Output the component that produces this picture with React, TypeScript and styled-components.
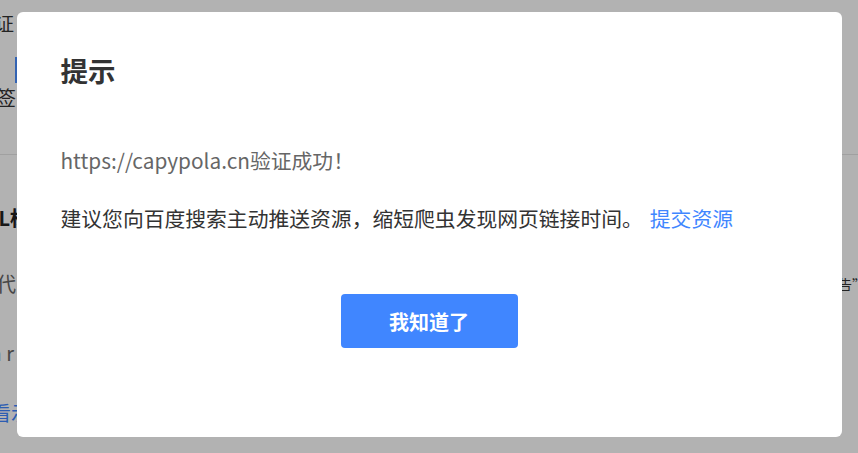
import React from "react";
import styled, { createGlobalStyle } from "styled-components";

const GlobalStyle = createGlobalStyle`
  html, body {
    margin: 0;
    padding: 0;
    width: 858px;
    height: 453px;
    overflow: hidden;
    background: #ffffff;
    font-family: "Noto Sans CJK SC", "Noto Sans", sans-serif;
  }
  * { box-sizing: border-box; }
`;

/* ---------- background page (mostly hidden by the dialog) ---------- */

const Page = styled.div`
  width: 858px;
  height: 453px;
  display: flex;
  flex-direction: column;
  background: #ffffff;
  overflow: hidden;
`;

const BgRow = styled.div<{ $h: number }>`
  height: ${(p) => p.$h}px;
  display: flex;
  align-items: center;
  justify-content: space-between;
  flex-shrink: 0;
`;

const Clip = styled.div<{ $end: number }>`
  width: ${(p) => p.$end}px;
  display: flex;
  justify-content: flex-end;
  white-space: nowrap;
  flex-shrink: 0;
`;

const BgText = styled.span<{ $size: number; $color: string; $bold?: boolean }>`
  font-size: ${(p) => p.$size}px;
  line-height: 1;
  color: ${(p) => p.$color};
  font-weight: ${(p) => (p.$bold ? 700 : 400)};
`;

const TabBar = styled.div`
  align-self: flex-start;
  width: 6px;
  height: 26px;
  margin: 13px 0 0 15px;
  background: #4a8fff;
`;

const Divider = styled.div`
  height: 1px;
  background: #e6e6e6;
  flex-shrink: 0;
`;

const RightBit = styled.div`
  width: 20px;
  display: flex;
  white-space: nowrap;
  overflow: hidden;
  flex-shrink: 0;
`;

/* ---------- dialog ---------- */

const Overlay = styled.div`
  position: fixed;
  inset: 0;
  background: rgba(0, 0, 0, 0.3);
  display: flex;
  justify-content: center;
  align-items: flex-start;
  padding-top: 12px;
`;

const Dialog = styled.div`
  width: 825px;
  background: #ffffff;
  border-radius: 6px;
  padding: 40px 44px 89px 44px;
  display: flex;
  flex-direction: column;
`;

const Title = styled.h2`
  margin: 0;
  font-size: 27.5px;
  line-height: 36px;
  font-weight: 700;
  color: #333333;
`;

const Message = styled.p<{ $tone: "muted" | "main"; $gap: number }>`
  margin: ${(p) => p.$gap}px 0 0 0;
  font-size: 20.8px;
  line-height: 30px;
  white-space: nowrap;
  color: ${(p) => (p.$tone === "muted" ? "#666666" : "#333333")};
`;

const Link = styled.a`
  color: #4086ff;
  text-decoration: none;
  margin-left: 7px;
`;

const Footer = styled.div`
  margin-top: 61px;
  display: flex;
  justify-content: center;
`;

const Button = styled.button`
  width: 177px;
  height: 54px;
  border: none;
  border-radius: 4px;
  background: #4086ff;
  color: #ffffff;
  font-family: inherit;
  font-size: 20px;
  font-weight: 700;
  cursor: pointer;
`;

export default function App() {
  return (
    <>
      <GlobalStyle />
      <Page>
        <BgRow $h={44}>
          <Clip $end={14}>
            <BgText $size={19} $color="#333">文件验证</BgText>
          </Clip>
        </BgRow>
        <BgRow $h={40}>
          <TabBar />
        </BgRow>
        <BgRow $h={28}>
          <Clip $end={16}>
            <BgText $size={20} $color="#333">验证标签</BgText>
          </Clip>
        </BgRow>
        <BgRow $h={42} />
        <Divider />
        <BgRow $h={40} />
        <BgRow $h={46}>
          <Clip $end={30}>
            <BgText $size={20} $color="#222" $bold>URL标</BgText>
          </Clip>
        </BgRow>
        <BgRow $h={20} />
        <BgRow $h={46}>
          <Clip $end={16}>
            <BgText $size={20} $color="#666">替代</BgText>
          </Clip>
          <RightBit>
            <BgText $size={14} $color="#333">告”</BgText>
          </RightBit>
        </BgRow>
        <BgRow $h={24} />
        <BgRow $h={44}>
          <Clip $end={14}>
            <BgText $size={20} $color="#666">an r</BgText>
          </Clip>
        </BgRow>
        <BgRow $h={16} />
        <BgRow $h={44}>
          <Clip $end={51}>
            <BgText $size={20} $color="#4086ff">查看示例</BgText>
          </Clip>
        </BgRow>
      </Page>
      <Overlay>
        <Dialog role="dialog" aria-modal="true">
          <Title>提示</Title>
          <Message $tone="muted" $gap={57}>
            https://capypola.cn验证成功！
          </Message>
          <Message $tone="main" $gap={28}>
            建议您向百度搜索主动推送资源，缩短爬虫发现网页链接时间。
            <Link href="#">提交资源</Link>
          </Message>
          <Footer>
            <Button type="button">我知道了</Button>
          </Footer>
        </Dialog>
      </Overlay>
    </>
  );
}
